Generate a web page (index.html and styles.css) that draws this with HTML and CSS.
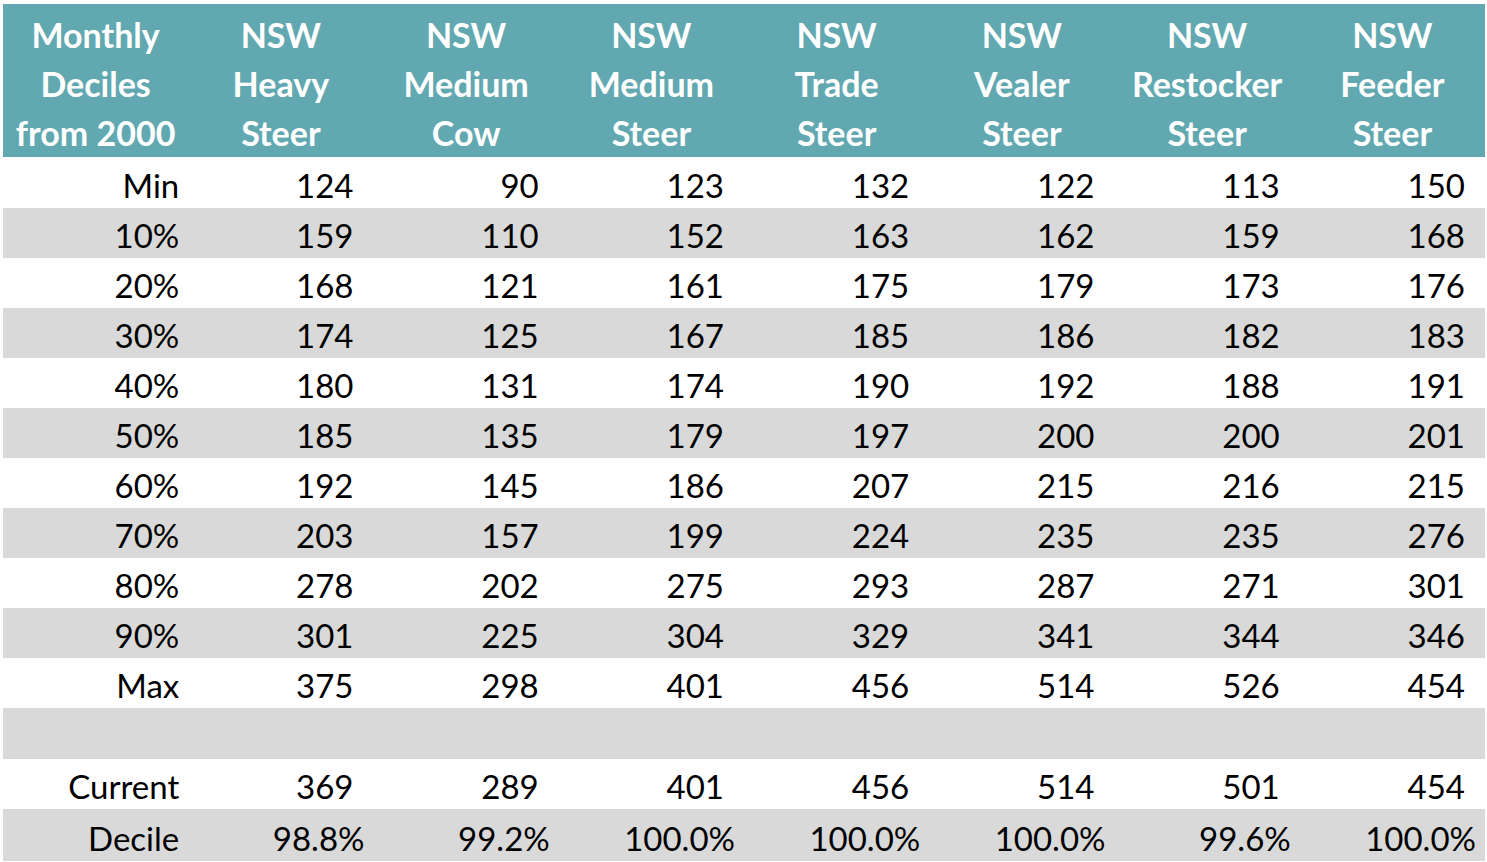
FILE: index.html
```html
<!DOCTYPE html>
<html>
<head>
<meta charset="utf-8">
<link rel="stylesheet" href="styles.css">
</head>
<body>
<table class="deciles">
  <colgroup>
    <col class="c"><col class="c"><col class="c"><col class="c"><col class="c"><col class="c"><col class="c"><col class="c">
  </colgroup>
  <thead>
    <tr>
      <th>Monthly<br>Deciles<br>from 2000</th>
      <th>NSW<br>Heavy<br>Steer</th>
      <th>NSW<br>Medium<br>Cow</th>
      <th>NSW<br>Medium<br>Steer</th>
      <th>NSW<br>Trade<br>Steer</th>
      <th>NSW<br>Vealer<br>Steer</th>
      <th>NSW<br>Restocker<br>Steer</th>
      <th>NSW<br>Feeder<br>Steer</th>
    </tr>
  </thead>
  <tbody>
    <tr><td class="lbl">Min</td><td>124</td><td>90</td><td>123</td><td>132</td><td>122</td><td>113</td><td>150</td></tr>
    <tr class="alt"><td class="lbl">10%</td><td>159</td><td>110</td><td>152</td><td>163</td><td>162</td><td>159</td><td>168</td></tr>
    <tr><td class="lbl">20%</td><td>168</td><td>121</td><td>161</td><td>175</td><td>179</td><td>173</td><td>176</td></tr>
    <tr class="alt"><td class="lbl">30%</td><td>174</td><td>125</td><td>167</td><td>185</td><td>186</td><td>182</td><td>183</td></tr>
    <tr><td class="lbl">40%</td><td>180</td><td>131</td><td>174</td><td>190</td><td>192</td><td>188</td><td>191</td></tr>
    <tr class="alt"><td class="lbl">50%</td><td>185</td><td>135</td><td>179</td><td>197</td><td>200</td><td>200</td><td>201</td></tr>
    <tr><td class="lbl">60%</td><td>192</td><td>145</td><td>186</td><td>207</td><td>215</td><td>216</td><td>215</td></tr>
    <tr class="alt"><td class="lbl">70%</td><td>203</td><td>157</td><td>199</td><td>224</td><td>235</td><td>235</td><td>276</td></tr>
    <tr><td class="lbl">80%</td><td>278</td><td>202</td><td>275</td><td>293</td><td>287</td><td>271</td><td>301</td></tr>
    <tr class="alt"><td class="lbl">90%</td><td>301</td><td>225</td><td>304</td><td>329</td><td>341</td><td>344</td><td>346</td></tr>
    <tr><td class="lbl">Max</td><td>375</td><td>298</td><td>401</td><td>456</td><td>514</td><td>526</td><td>454</td></tr>
    <tr class="alt blank"><td></td><td></td><td></td><td></td><td></td><td></td><td></td><td></td></tr>
    <tr><td class="lbl">Current</td><td>369</td><td>289</td><td>401</td><td>456</td><td>514</td><td>501</td><td>454</td></tr>
    <tr class="alt pct"><td class="lbl">Decile</td><td>98.8%</td><td>99.2%</td><td>100.0%</td><td>100.0%</td><td>100.0%</td><td>99.6%</td><td>100.0%</td></tr>
  </tbody>
</table>
</body>
</html>
```

FILE: styles.css
```css
html, body {
  margin: 0;
  padding: 0;
  background: #ffffff;
}

body {
  padding: 4px 0 0 3px;
}

.deciles {
  width: 1482px;
  table-layout: fixed;
  border-collapse: collapse;
  border-spacing: 0;
  font-family: Lato, "Liberation Sans", sans-serif;
  font-size: 33px;
  color: #000000;
}

.deciles th {
  background: #62a8b1;
  color: #ffffff;
  font-size: 34px;
  font-weight: 700;
  text-align: center;
  vertical-align: top;
  line-height: 49px;
  height: 153px;
  box-sizing: border-box;
  padding: 6px 0 0 0;
}

.deciles td {
  height: 50px;
  padding: 4px 20px 0 0;
  box-sizing: border-box;
  text-align: right;
  vertical-align: middle;
  line-height: 46px;
  white-space: nowrap;
}

.deciles td.lbl {
  padding-right: 9px;
}

.deciles tr.pct td {
  padding-right: 9px;
  height: 52px;
  padding-top: 5px;
}

.deciles tr.alt td {
  background: #d9d9d9;
}

.deciles tr.blank td {
  height: 51px;
}

.deciles tbody tr:first-child td {
  height: 51px;
  padding-top: 5px;
}
```
